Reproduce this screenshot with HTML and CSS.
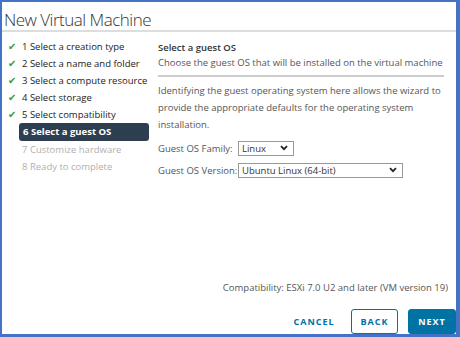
FILE: index.html
```html
<!DOCTYPE html>
<html lang="en">
<head>
    <meta charset="UTF-8">
    <title>New Virtual Machine</title>
    <link rel="stylesheet" href="styles.css">
</head>
<body>
    <div class="wizard">
        <div class="wizard-header">New Virtual Machine</div>

        <div class="wizard-body">
            <ul class="steps">
                <li class="step done"><span class="check">&#10004;</span>1 Select a creation type</li>
                <li class="step done"><span class="check">&#10004;</span>2 Select a name and folder</li>
                <li class="step done"><span class="check">&#10004;</span>3 Select a compute resource</li>
                <li class="step done"><span class="check">&#10004;</span>4 Select storage</li>
                <li class="step done"><span class="check">&#10004;</span>5 Select compatibility</li>
                <li class="step active">6 Select a guest OS</li>
                <li class="step todo">7 Customize hardware</li>
                <li class="step todo">8 Ready to complete</li>
            </ul>

            <div class="content">
                <div class="content-title">Select a guest OS</div>
                <div class="content-sub">Choose the guest OS that will be installed on the virtual machine</div>

                <p class="intro">Identifying the guest operating system here allows the wizard to provide the appropriate defaults for the operating system installation.</p>

                <div class="form-row">
                    <label>Guest OS Family:</label>
                    <div class="select family">
                        <span>Linux</span>
                        <svg class="caret" width="8" height="6" viewBox="0 0 8 6"><path d="M1 1.2 L4 4.2 L7 1.2" fill="none" stroke="#222" stroke-width="1.8"/></svg>
                    </div>
                </div>
                <div class="form-row">
                    <label>Guest OS Version:</label>
                    <div class="select version">
                        <span>Ubuntu Linux (64-bit)</span>
                        <svg class="caret" width="8" height="6" viewBox="0 0 8 6"><path d="M1 1.2 L4 4.2 L7 1.2" fill="none" stroke="#222" stroke-width="1.8"/></svg>
                    </div>
                </div>

                <div class="compat">Compatibility: ESXi 7.0 U2 and later (VM version 19)</div>
            </div>
        </div>

        <div class="wizard-footer">
            <button class="btn btn-link">CANCEL</button>
            <button class="btn btn-outline">BACK</button>
            <button class="btn btn-primary">NEXT</button>
        </div>
    </div>
</body>
</html>
```

FILE: styles.css
```css
* {
    box-sizing: border-box;
}

html, body {
    margin: 0;
    padding: 0;
}

body {
    width: 460px;
    height: 337px;
    font-family: "Open Sans", Arial, sans-serif;
    color: #565656;
    background: #fff;
}

.wizard {
    width: 460px;
    height: 337px;
    border-style: solid;
    border-color: #4472c4;
    border-width: 2px 4px 3px 2px;
    display: flex;
    flex-direction: column;
}

.wizard-header {
    height: 30px;
    padding: 6px 0 0 2px;
    font-family: "Open Sans", sans-serif;
    font-size: 17px;
    font-weight: 300;
    letter-spacing: -0.5px;
    color: #333;
    border-bottom: 2px solid #ddd;
}

.wizard-body {
    flex: 1;
    display: flex;
}

.steps {
    list-style: none;
    margin: 0;
    padding: 6px 0 0 15px;
    width: 158px;
}

.step {
    position: relative;
    height: 17px;
    line-height: 17px;
    font-size: 9.5px;
    font-weight: 500;
    color: #222;
    padding-left: 5px;
    white-space: nowrap;
}

.check {
    position: absolute;
    left: -9px;
    top: 0;
    color: #3f9a2e;
    font-size: 10px;
}

.step.active {
    width: 130px;
    height: 18px;
    line-height: 18px;
    margin-left: 2px;
    padding-left: 4px;
    background: #2c3e50;
    color: #fff;
    font-weight: 700;
    border-radius: 3px;
}

.step.todo {
    color: #b0b0b0;
}

.content {
    flex: 1;
    padding: 8px 8px 0 2px;
    display: flex;
    flex-direction: column;
}

.content-title {
    font-size: 9.5px;
    font-weight: 600;
    color: #333;
    line-height: 16px;
}

.content-sub {
    font-size: 9.5px;
    color: #565656;
    line-height: 14px;
    padding-bottom: 5px;
    border-bottom: 2px solid #ccc;
    width: 286px;
    white-space: nowrap;
}

.intro {
    margin: 5px 0 4px;
    font-size: 9.5px;
    line-height: 17px;
    width: 290px;
}

.form-row {
    display: flex;
    align-items: center;
    height: 22px;
    font-size: 9.5px;
}

.form-row label {
    width: 80px;
}

.select {
    height: 15px;
    border: 1px solid #999;
    display: flex;
    align-items: center;
    justify-content: space-between;
    padding: 0 5px 0 3px;
    color: #333;
    font-size: 9.5px;
}

.family {
    width: 56px;
}

.version {
    width: 165px;
}

.compat {
    margin-top: auto;
    text-align: right;
    font-size: 9.5px;
    padding: 0 0 15px;
}

.wizard-footer {
    height: 25px;
    display: flex;
    justify-content: flex-end;
    align-items: flex-start;
    gap: 10px;
}

.btn {
    font-family: "Open Sans", Arial, sans-serif;
    font-size: 9px;
    font-weight: 700;
    letter-spacing: 1px;
    height: 25px;
    border-radius: 3px;
    padding: 0;
    cursor: pointer;
}

.btn-link {
    background: none;
    border: none;
    color: #0072a3;
    width: 50px;
}

.btn-outline {
    background: #fff;
    border: 1px solid #0072a3;
    color: #0072a3;
    width: 47px;
    margin-left: 2px;
}

.btn-primary {
    background: #0072a3;
    border: 1px solid #0072a3;
    color: #fff;
    width: 48px;
}
```
